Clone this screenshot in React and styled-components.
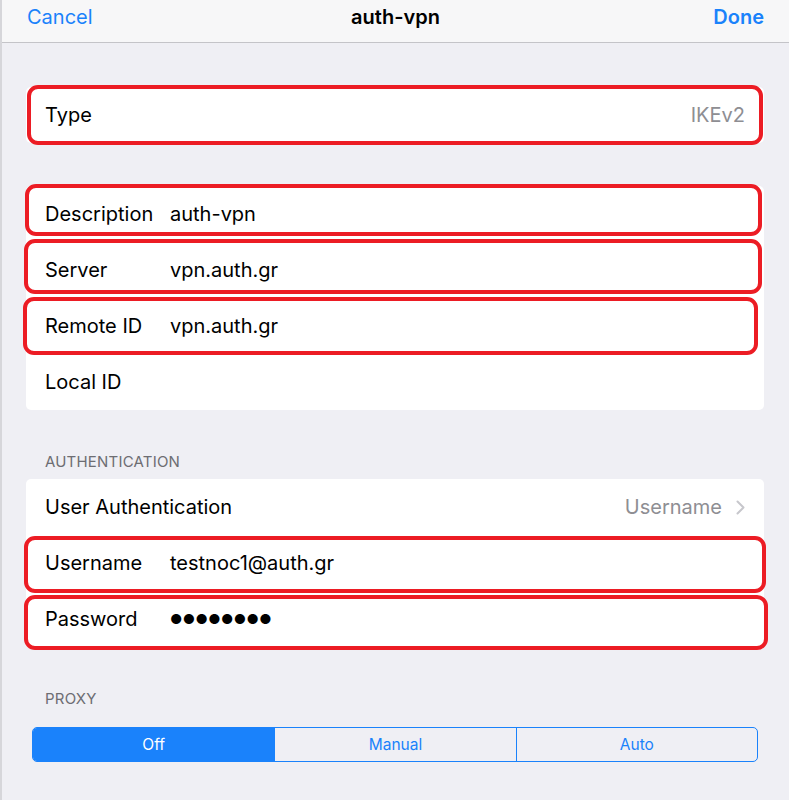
import React from "react";
import styled, { createGlobalStyle } from "styled-components";

const GlobalStyle = createGlobalStyle`
  html, body {
    margin: 0;
    padding: 0;
    background: #efeff4;
  }
  body {
    font-family: Inter, "Noto Sans", sans-serif;
    -webkit-font-smoothing: antialiased;
  }
`;

const Page = styled.div`
  width: 789px;
  height: 800px;
  overflow: hidden;
  box-sizing: border-box;
  border-left: 2px solid #d6d6da;
  background: #efeff4;
`;

const NavBar = styled.div`
  height: 43px;
  box-sizing: border-box;
  display: grid;
  grid-template-columns: 1fr auto 1fr;
  align-items: center;
  padding: 0 25px 8px 25px;
  background: #f7f7f8;
  border-bottom: 1px solid #c4c4c8;
`;

const NavButton = styled.span`
  font-size: 20px;
  color: #1a82fb;
  font-weight: ${(p) => (p.$bold ? 600 : 400)};
  justify-self: ${(p) => (p.$right ? "end" : "start")};
`;

const Title = styled.span`
  font-size: 20px;
  font-weight: 600;
  color: #000;
`;

const Content = styled.div`
  padding: 44px 25px 0 24px;
  display: flex;
  flex-direction: column;
`;

const Card = styled.div`
  background: #fff;
  border-radius: 5px;
  margin-bottom: ${(p) => p.$gap || 0}px;
`;

const Row = styled.div`
  position: relative;
  height: 56px;
  display: flex;
  align-items: center;
  padding: 0 19px 0 19px;
  font-size: 20px;
  color: #000;

  & + &::before {
    content: "";
    position: absolute;
    top: 0;
    left: 19px;
    right: 0;
    height: 1px;
    background: #dcdce0;
  }

  ${(p) =>
    p.$mark &&
    `
    &::after {
      content: "";
      position: absolute;
      top: ${p.$mark[0]}px;
      right: ${p.$mark[1]}px;
      bottom: ${p.$mark[2]}px;
      left: ${p.$mark[3]}px;
      border: 4px solid #ec1c24;
      border-radius: 11px;
      pointer-events: none;
    }
  `}
`;

const Label = styled.span`
  width: 125px;
  flex-shrink: 0;
  white-space: nowrap;
`;

const Value = styled.span`
  flex: 1;
  white-space: nowrap;
`;

const Detail = styled.span`
  margin-left: auto;
  color: #8e8e93;
  display: flex;
  align-items: center;
  gap: 14px;
`;

const Dots = styled.span`
  font-size: 13.5px;
  letter-spacing: 0.4px;
`;

const SectionHeader = styled.div`
  font-size: 15px;
  color: #6d6d72;
  letter-spacing: 0.2px;
  padding: 0 0 8px 19px;
`;

const Segmented = styled.div`
  margin: 11px 6px 0 6px;
  display: grid;
  grid-template-columns: repeat(3, 1fr);
  height: 35px;
  box-sizing: border-box;
  border: 1px solid #1a82fb;
  border-radius: 5px;
  overflow: hidden;
`;

const Segment = styled.div`
  display: flex;
  align-items: center;
  justify-content: center;
  font-size: 15.5px;
  color: ${(p) => (p.$active ? "#fff" : "#1a82fb")};
  background: ${(p) => (p.$active ? "#1a82fb" : "transparent")};
  & + & {
    border-left: 1px solid #1a82fb;
  }
`;

const Chevron = () => (
  <svg width="9" height="15" viewBox="0 0 9 15">
    <polyline
      points="1.5,1.5 7.5,7.5 1.5,13.5"
      fill="none"
      stroke="#c7c7cc"
      strokeWidth="2"
      strokeLinecap="round"
      strokeLinejoin="round"
    />
  </svg>
);

export default function App() {
  return (
    <Page>
      <GlobalStyle />
      <NavBar>
        <NavButton>Cancel</NavButton>
        <Title>auth-vpn</Title>
        <NavButton $bold $right>
          Done
        </NavButton>
      </NavBar>
      <Content>
        <Card $gap={43}>
          <Row $mark={[-2, 1, -2, 1]}>
            <Label>Type</Label>
            <Detail>IKEv2</Detail>
          </Row>
        </Card>

        <Card $gap={42}>
          <Row $mark={[-2, 2, 6, -1]}>
            <Label>Description</Label>
            <Value>auth-vpn</Value>
          </Row>
          <Row $mark={[-3, 2, 4, -2]}>
            <Label>Server</Label>
            <Value>vpn.auth.gr</Value>
          </Row>
          <Row $mark={[-1, 6, -1, -3]}>
            <Label>Remote ID</Label>
            <Value>vpn.auth.gr</Value>
          </Row>
          <Row>
            <Label>Local ID</Label>
          </Row>
        </Card>

        <SectionHeader>AUTHENTICATION</SectionHeader>
        <Card $gap={42}>
          <Row>
            <Label>User Authentication</Label>
            <Detail>
              Username
              <Chevron />
            </Detail>
          </Row>
          <Row $mark={[1, -2, -2, -2]}>
            <Label>Username</Label>
            <Value>testnoc1@auth.gr</Value>
          </Row>
          <Row $mark={[4, -4, -3, -2]}>
            <Label>Password</Label>
            <Dots>●●●●●●●●</Dots>
          </Row>
        </Card>

        <SectionHeader>PROXY</SectionHeader>
        <Segmented>
          <Segment $active>Off</Segment>
          <Segment>Manual</Segment>
          <Segment>Auto</Segment>
        </Segmented>
      </Content>
    </Page>
  );
}
